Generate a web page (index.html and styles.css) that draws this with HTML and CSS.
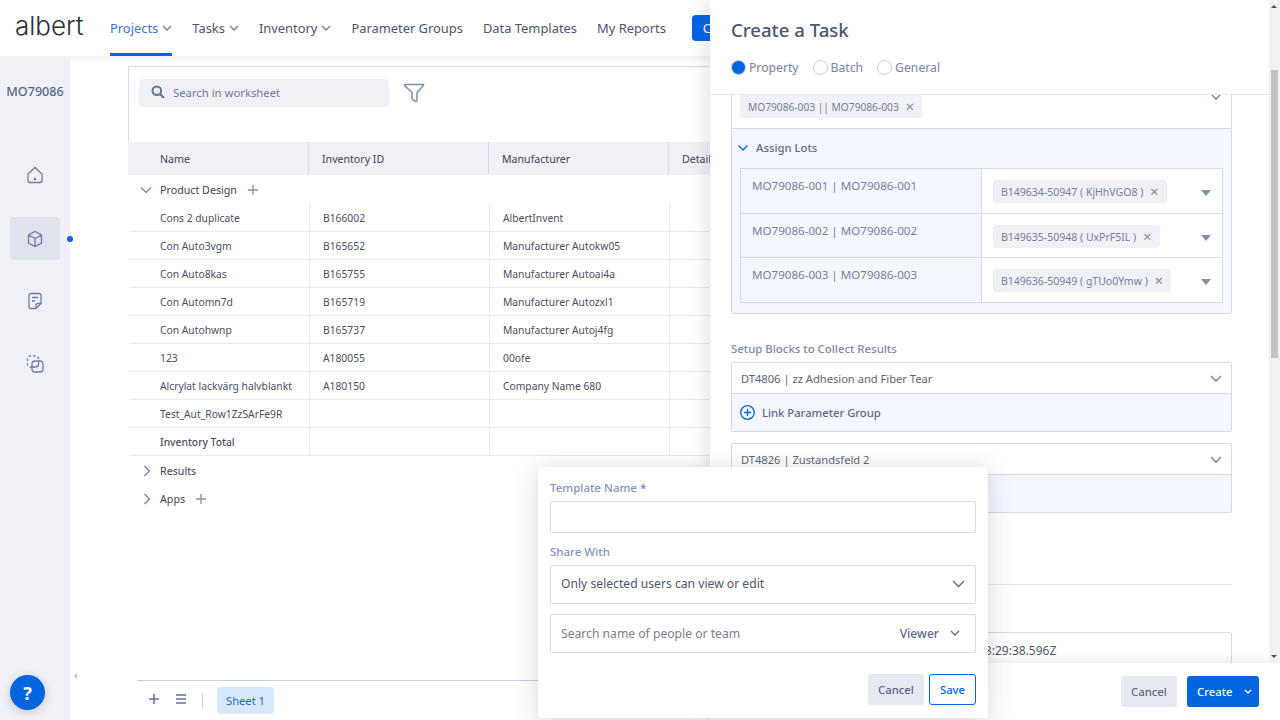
FILE: index.html
```html
<!DOCTYPE html>
<html>
<head>
<meta charset="utf-8" />
<title>Worksheet</title>
<link rel="stylesheet" href="styles.css">
</head>
<body>
<header class="topbar">
	<div class="logo">albert</div>
	<nav class="nav">
		<a class="nav-item active">Projects <svg class="chev" width="10" height="6" viewBox="0 0 10 6"><path d="M1 1l4 4 4-4"/></svg></a>
		<a class="nav-item">Tasks <svg class="chev" width="10" height="6" viewBox="0 0 10 6"><path d="M1 1l4 4 4-4"/></svg></a>
		<a class="nav-item">Inventory <svg class="chev" width="10" height="6" viewBox="0 0 10 6"><path d="M1 1l4 4 4-4"/></svg></a>
		<a class="nav-item">Parameter Groups</a>
		<a class="nav-item">Data Templates</a>
		<a class="nav-item">My Reports</a>
	</nav>
	<button class="top-create">C</button>
</header>

<div class="app">
	<aside class="sidebar">
		<div class="project-id">MO79086</div>
		<div class="side-icons">
			<div class="side-icon"><svg width="20" height="20" viewBox="0 0 20 20"><path d="M3 9l7-6.500L17 9v6.500a2 2 0 0 1-2 2H5a2 2 0 0 1-2-2z"/><circle cx="10" cy="14" r=".6"/></svg></div>
			<div class="side-icon current"><svg width="20" height="20" viewBox="0 0 20 20"><path d="M10 2.500l6.500 3.500v8L10 17.500 3.500 14V6zM3.500 6L10 9.500 16.500 6M10 9.500v8"/></svg><span class="side-dot"></span></div>
			<div class="side-icon"><svg width="20" height="20" viewBox="0 0 20 20"><path d="M11 17.500H6a2 2 0 0 1-2-2v-11a2 2 0 0 1 2-2h8a2 2 0 0 1 2 2v8zM7 6.500h6M7 10h3M11 17.500v-3a2 2 0 0 1 2-2h3"/></svg></div>
			<div class="side-icon"><svg width="20" height="20" viewBox="0 0 20 20"><path d="M7 13H5a2.500 2.500 0 0 1-2.500-2.500v-6A2.500 2.500 0 0 1 5 2h6a2.500 2.500 0 0 1 2.500 2.500V7" stroke-dasharray="2.500 2.200"/><rect x="7" y="7" width="11" height="11" rx="3"/><path d="M7 13h3.500a3 3 0 0 0 3-3V7"/></svg></div>
		</div>
		<button class="help">?</button>
	</aside>

	<main class="sheet">
		<span class="collapse-arrow"></span>
		<div class="sheet-card">
			<div class="sheet-tools">
				<div class="sheet-search">
					<svg width="14" height="14" viewBox="0 0 14 14"><circle cx="5.800" cy="5.800" r="4.300"/><path d="M9 9l4 4"/></svg>
					<span>Search in worksheet</span>
				</div>
				<svg class="filter" width="22" height="22" viewBox="0 0 22 22"><path d="M2 2.500h18a.6.6 0 0 1 .4 1L14 10.500v8a1 1 0 0 1-1.500.8l-3-2a1 1 0 0 1-.5-.8v-6L1.600 3.500A.6.6 0 0 1 2 2.500z"/></svg>
			</div>
			<div class="grid-head">
				<div class="col-name">Name</div>
				<div class="col-id">Inventory ID</div>
				<div class="col-man">Manufacturer</div>
				<div class="col-rest">Details</div>
			</div>
			<div class="group group-first">
				<svg class="tw" width="12" height="8" viewBox="0 0 12 8"><path d="M1 1.500l5 5 5-5"/></svg>
				<span>Product Design</span>
				<svg class="plus" width="10" height="10" viewBox="0 0 10 10"><path d="M5 0v10M0 5h10"/></svg>
			</div>
			<div class="row"><div class="col-name">Cons 2 duplicate</div><div class="col-id">B166002</div><div class="col-man">AlbertInvent</div><div class="col-rest"></div></div>
			<div class="row"><div class="col-name">Con Auto3vgm</div><div class="col-id">B165652</div><div class="col-man">Manufacturer Autokw05</div><div class="col-rest"></div></div>
			<div class="row"><div class="col-name">Con Auto8kas</div><div class="col-id">B165755</div><div class="col-man">Manufacturer Autoai4a</div><div class="col-rest"></div></div>
			<div class="row"><div class="col-name">Con Automn7d</div><div class="col-id">B165719</div><div class="col-man">Manufacturer Autozxl1</div><div class="col-rest"></div></div>
			<div class="row"><div class="col-name">Con Autohwnp</div><div class="col-id">B165737</div><div class="col-man">Manufacturer Autoj4fg</div><div class="col-rest"></div></div>
			<div class="row"><div class="col-name">123</div><div class="col-id">A180055</div><div class="col-man">00ofe</div><div class="col-rest"></div></div>
			<div class="row"><div class="col-name">Alcrylat lackvärg halvblankt</div><div class="col-id">A180150</div><div class="col-man">Company Name 680</div><div class="col-rest"></div></div>
			<div class="row"><div class="col-name">Test_Aut_Row1ZzSArFe9R</div><div class="col-id"></div><div class="col-man"></div><div class="col-rest"></div></div>
			<div class="row row-total"><div class="col-name">Inventory Total</div><div class="col-id"></div><div class="col-man"></div><div class="col-rest"></div></div>
			<div class="group group-results">
				<svg class="tw tw-closed" width="8" height="12" viewBox="0 0 8 12"><path d="M1.500 1l5 5-5 5"/></svg>
				<span>Results</span>
			</div>
			<div class="group">
				<svg class="tw tw-closed" width="8" height="12" viewBox="0 0 8 12"><path d="M1.500 1l5 5-5 5"/></svg>
				<span>Apps</span>
				<svg class="plus" width="10" height="10" viewBox="0 0 10 10"><path d="M5 0v10M0 5h10"/></svg>
			</div>
		</div>
		<div class="sheet-tabs">
			<svg class="tab-icon" width="12" height="12" viewBox="0 0 12 12"><path d="M6 1v10M1 6h10"/></svg>
			<svg class="tab-icon" width="12" height="12" viewBox="0 0 12 12"><path d="M1 2h10M1 6h10M1 10h10"/></svg>
			<span class="tab-sep"></span>
			<span class="tab">Sheet 1</span>
		</div>
	</main>
</div>

<section class="drawer">
	<div class="drawer-head">
		<h2>Create a Task</h2>
		<div class="radios">
			<label class="radio on"><i></i>Property</label>
			<label class="radio"><i></i>Batch</label>
			<label class="radio"><i></i>General</label>
		</div>
	</div>
	<div class="drawer-body">
		<div class="lots-box">
			<div class="lots-top">
				<span class="chip chip-top">MO79086-003 || MO79086-003 <b>×</b></span>
				<svg class="top-chev" width="10" height="6" viewBox="0 0 10 6"><path d="M1 1l4 4 4-4"/></svg>
			</div>
			<div class="lots">
				<div class="lots-title">
					<svg width="10" height="6" viewBox="0 0 10 6"><path d="M.5.5L5 5 9.500.5"/></svg>
					Assign Lots
				</div>
				<div class="lots-table">
					<div class="lot"><div class="lot-name">MO79086-001 | MO79086-001</div><div class="lot-val"><span class="chip">B149634-50947 ( KjHhVGO8 ) <b>×</b></span><i class="caret"></i></div></div>
					<div class="lot"><div class="lot-name">MO79086-002 | MO79086-002</div><div class="lot-val"><span class="chip">B149635-50948 ( UxPrF5IL ) <b>×</b></span><i class="caret"></i></div></div>
					<div class="lot"><div class="lot-name">MO79086-003 | MO79086-003</div><div class="lot-val"><span class="chip">B149636-50949 ( gTUo0Ymw ) <b>×</b></span><i class="caret"></i></div></div>
				</div>
			</div>
		</div>

		<div class="blocks-label">Setup Blocks to Collect Results</div>
		<div class="block">
			<div class="block-top">DT4806 | zz Adhesion and Fiber Tear <svg width="12" height="7" viewBox="0 0 12 7"><path d="M1 1l5 5 5-5"/></svg></div>
			<div class="block-link">
				<svg width="15" height="15" viewBox="0 0 15 15"><circle cx="7.500" cy="7.500" r="6.800"/><path d="M7.500 4v7M4 7.500h7"/></svg>
				Link Parameter Group
			</div>
		</div>
		<div class="block">
			<div class="block-top">DT4826 | Zustandsfeld 2 <svg width="12" height="7" viewBox="0 0 12 7"><path d="M1 1l5 5 5-5"/></svg></div>
			<div class="block-link"></div>
		</div>
		<div class="rule"></div>
		<div class="date-field">13:29:38.596Z</div>
	</div>
	<div class="drawer-foot">
		<button class="btn btn-grey">Cancel</button>
		<button class="btn btn-blue">Create <svg width="8" height="5" viewBox="0 0 8 5"><path d="M1 1l3 3 3-3"/></svg></button>
	</div>
	<div class="scrollbar"><span class="arrow-up"></span><span class="thumb"></span><span class="arrow-down"></span></div>
</section>

<section class="popover">
	<label class="pop-label">Template Name <em>*</em></label>
	<div class="pop-input"></div>
	<label class="pop-label">Share With</label>
	<div class="pop-select">Only selected users can view or edit <svg width="13" height="8" viewBox="0 0 13 8"><path d="M1 1l5.500 5.500L12 1"/></svg></div>
	<div class="pop-search">
		<span class="pop-ph">Search name of people or team</span>
		<span class="pop-role">Viewer</span>
		<svg width="10" height="6" viewBox="0 0 10 6"><path d="M1 1l4 4 4-4"/></svg>
	</div>
	<div class="pop-actions">
		<button class="btn btn-grey">Cancel</button>
		<button class="btn btn-line">Save</button>
	</div>
</section>
</body>
</html>
```

FILE: styles.css
```css
* {
	box-sizing: border-box;
}

html, body {
	margin: 0;
	height: 720px;
	overflow: hidden;
}

body {
	position: relative;
	background-color: #fff;
	color: #4a5068;
	font-family: "Noto Sans", sans-serif;
	font-size: 12px;
}

svg {
	fill: none;
	stroke: #6d7ea6;
	stroke-width: 1.300;
	flex: none;
}

button {
	font-family: inherit;
	cursor: pointer;
}

/* top bar */

.topbar {
	display: flex;
	align-items: stretch;
	height: 56px;
	padding-left: 15px;
	background-color: #fff;
	box-shadow: 0 2px 8px rgba(60, 70, 100, 0.1);
	position: relative;
}

.logo {
	width: 95px;
	font-family: Inter, sans-serif;
	font-size: 26px;
	font-weight: 300;
	line-height: 52px;
	color: #2c2f38;
}

.nav {
	display: flex;
	gap: 20px;
}

.nav-item {
	display: flex;
	align-items: center;
	gap: 4px;
	height: 56px;
	padding-top: 2px;
	font-size: 12.900px;
	color: #4b5470;
	border-bottom: 3px solid transparent;
}

.nav-item.active {
	color: #3f6fd8;
	border-bottom-color: #0065e0;
}

.top-create {
	align-self: flex-start;
	margin: 15px 0 0 26px;
	width: 30px;
	height: 26px;
	padding: 0 0 0 11px;
	border: 0;
	border-radius: 4px;
	background-color: #0065e0;
	color: #fff;
	font-size: 13px;
	text-align: left;
}

/* left side */

.app {
	display: flex;
	height: 664px;
}

.sidebar {
	width: 70px;
	background-color: #f0f1f6;
	position: relative;
}

.project-id {
	margin-top: 27px;
	text-align: center;
	font-size: 12.600px;
	font-weight: 500;
	color: #5a6686;
}

.side-icons {
	display: flex;
	flex-direction: column;
	gap: 20px;
	margin: 53px 0 0 10px;
}

.side-icon {
	position: relative;
	display: flex;
	align-items: center;
	justify-content: center;
	width: 50px;
	height: 43px;
	border-radius: 4px;
}

.side-icon.current {
	top: 1px;
	background-color: #dfe3ed;
}

.side-dot {
	position: absolute;
	right: -13px;
	top: 19px;
	width: 6px;
	height: 6px;
	border-radius: 50%;
	background-color: #0065e0;
}

.help {
	position: absolute;
	left: 10px;
	bottom: 10px;
	width: 35px;
	height: 35px;
	border: 0;
	border-radius: 50%;
	background-color: #0065e0;
	color: #fff;
	font-size: 18px;
	font-weight: 700;
	box-shadow: 0 2px 8px rgba(60, 70, 100, 0.25);
}

/* worksheet */

.sheet {
	flex: 1;
	padding: 10px 0 0 58px;
	position: relative;
}

.collapse-arrow {
	position: absolute;
	left: 4px;
	bottom: 41px;
	border-top: 3px solid transparent;
	border-bottom: 3px solid transparent;
	border-right: 3px solid #c4c8d2;
}

.sheet-tools {
	display: flex;
	align-items: flex-start;
	gap: 14px;
	height: 76px;
	padding: 12px 0 0 10px;
	border-top: 1px solid #d4daea;
	border-left: 1px solid #d4daea;
}

.sheet-search {
	display: flex;
	align-items: center;
	gap: 8px;
	width: 250px;
	height: 28px;
	padding: 0 0 2px 12px;
	background-color: #f0f1f6;
	border-radius: 4px;
	font-size: 11.300px;
	color: #6f7c9c;
}

.sheet-search svg {
	stroke: #5f7099;
	stroke-width: 2;
}

.filter {
	margin-top: 3px;
	stroke: #7d8cb0;
	stroke-width: 1.500;
}

.grid-head, .row {
	display: flex;
}

.grid-head {
	height: 33px;
	background-color: #f0f1f6;
	color: #3d4258;
	font-size: 10.600px;
}

.grid-head > div {
	display: flex;
	align-items: center;
	height: 32px;
	padding-top: 2px;
	border-right: 1px solid #d4daea;
}

.col-name {
	flex: none;
	width: 181px;
	padding-left: 31px;
}

.grid-head .col-name {
	padding-left: 32px;
}

.col-id, .col-man {
	flex: none;
	width: 180px;
	padding-left: 13px;
}

.col-rest {
	flex: none;
	width: 60px;
	padding-left: 13px;
	border-right: 0 !important;
	white-space: nowrap;
	overflow: hidden;
}

.row {
	height: 28px;
	margin-left: 1px;
	border-bottom: 1px solid #e6e9f1;
	color: #4a4f5f;
	font-size: 10.300px;
}

.row > div {
	display: flex;
	align-items: center;
	border-right: 1px solid #e6e9f1;
}

.row-total {
	font-weight: 500;
}

.group {
	display: flex;
	align-items: center;
	height: 28px;
	padding-left: 12px;
	font-size: 10.700px;
	color: #3d4258;
}

.group-first {
	height: 29px;
}

.group-results {
	margin-top: 1px;
}

.group .tw {
	margin-right: 8px;
	stroke-width: 1.100;
}

.group .tw-closed {
	margin: 0 9px 0 3px;
	stroke-width: 1.200;
}

.plus {
	margin-left: 11px;
	stroke: #8090b4;
}

.sheet-tabs {
	position: absolute;
	left: 67px;
	right: 0;
	bottom: 0;
	height: 40px;
	display: flex;
	align-items: center;
	gap: 15px;
	padding-left: 11px;
	background-color: #fff;
	border-top: 1px solid #c9d0e3;
	box-shadow: 0 -6px 12px rgba(255, 255, 255, 0.9);
}

.tab-icon {
	stroke: #5f7099;
	stroke-width: 1.500;
	margin-top: -4px;
}

.tab-sep {
	width: 1px;
	height: 16px;
	background-color: #c9d0e3;
}

.tab {
	display: flex;
	align-items: center;
	height: 27px;
	margin-left: -1px;
	padding: 0 9px;
	border-radius: 4px;
	background-color: #d8e8fc;
	color: #2366d1;
	font-size: 11.200px;
}

/* create task drawer */

.drawer {
	position: absolute;
	left: 710px;
	top: 0;
	width: 570px;
	height: 720px;
	background-color: #fff;
	box-shadow: -6px 0 14px rgba(60, 70, 100, 0.12);
	display: flex;
	flex-direction: column;
}

.drawer-head {
	height: 95px;
	padding: 15px 0 0 21px;
	border-bottom: 1px solid #e4e7f0;
	margin-right: 11px;
}

.drawer-head h2 {
	margin: 0;
	font-size: 18.600px;
	font-weight: 500;
	line-height: 30px;
	color: #4a5672;
}

.radios {
	display: flex;
	gap: 14px;
	margin-top: 14px;
}

.radio {
	display: flex;
	align-items: center;
	gap: 3px;
	font-size: 12.200px;
	color: #79839e;
}

.radio i {
	width: 15px;
	height: 15px;
	border: 1px solid #c7ccd8;
	border-radius: 50%;
}

.radio.on i {
	background-color: #0065e0;
	border: 1px solid #c7d6ee;
}

.drawer-body {
	flex: 1;
	padding-left: 21px;
	width: 522px;
	overflow: hidden;
}

.lots-box {
	border: 1px solid #d4daea;
	border-top: 0;
	border-radius: 0 0 3px 3px;
}

.lots-top {
	position: relative;
	height: 34px;
	padding-left: 8px;
	border-bottom: 1px solid #d4daea;
}

.top-chev {
	position: absolute;
	right: 10px;
	top: -1px;
}

.chip {
	display: inline-block;
	height: 23px;
	padding: 0 8px;
	line-height: 22px;
	background-color: #f0f1f6;
	border-radius: 3px;
	font-size: 10.500px;
	color: #76809c;
	white-space: nowrap;
}

.chip-top {
	font-size: 10.200px;
}

.chip b {
	margin-left: 4px;
	font-size: 15px;
	font-weight: 400;
	color: #7e88a3;
	vertical-align: -1px;
}

.lots {
	background-color: #f4f7fe;
	padding: 0 8px 10px;
}

.lots-title {
	display: flex;
	align-items: center;
	gap: 8px;
	height: 39px;
	margin-left: -2px;
	padding-bottom: 2px;
	font-size: 11.300px;
	font-weight: 500;
	color: #5d6a8a;
}

.lots-title svg {
	stroke: #0065e0;
}

.lots-table {
	border: 1px solid #d4daea;
	border-bottom: 0;
}

.lot {
	display: flex;
	height: 45px;
	border-bottom: 1px solid #d4daea;
}

.lot:nth-child(2) {
	height: 44px;
}

.lot-name {
	width: 241px;
	padding: 9px 0 0 11px;
	border-right: 1px solid #d4daea;
	font-size: 11.600px;
	color: #76809c;
}

.lot-val {
	flex: 1;
	position: relative;
	padding: 11px 0 0 11px;
	background-color: #fff;
}

.caret {
	position: absolute;
	right: 11px;
	top: 21px;
	border-left: 5px solid transparent;
	border-right: 5px solid transparent;
	border-top: 6px solid #8290b0;
}

.blocks-label {
	margin: 27px 0 6px;
	font-size: 11.400px;
	font-weight: 500;
	color: #7c88a8;
}

.block {
	margin-bottom: 11px;
	border: 1px solid #d4daea;
	border-radius: 2px;
}

.block-top {
	display: flex;
	align-items: center;
	justify-content: space-between;
	height: 31px;
	padding: 0 9px;
	border-bottom: 1px solid #d4daea;
	font-size: 11.150px;
	color: #5b6478;
}

.block-link {
	display: flex;
	align-items: center;
	gap: 7px;
	height: 37px;
	padding-left: 8px;
	background-color: #f4f7fe;
	font-size: 11.250px;
	font-weight: 500;
	color: #5d6a8a;
}

.block-link svg {
	stroke: #0065e0;
}

.rule {
	margin-top: 71px;
	height: 1px;
	background-color: #e4e7f0;
}

.date-field {
	margin-top: 47px;
	height: 40px;
	padding: 9px 0;
	border: 1px solid #d4daea;
	border-radius: 2px;
	font-size: 12px;
	color: #4f5568;
	text-indent: 246px;
}

.drawer-foot {
	position: absolute;
	left: 0;
	right: 0;
	bottom: 0;
	height: 57px;
	display: flex;
	justify-content: flex-end;
	align-items: center;
	gap: 10px;
	padding: 0 21px 0 0;
	background-color: #fff;
	box-shadow: 0 -3px 8px rgba(60, 70, 100, 0.1);
}

.btn {
	height: 31px;
	border: 0;
	border-radius: 3px;
	font-size: 11.300px;
	font-weight: 500;
}

.btn-grey {
	width: 56px;
	background-color: #e6e9f1;
	color: #5a6686;
}

.btn-blue {
	display: flex;
	align-items: center;
	justify-content: space-between;
	width: 72px;
	padding: 0 7px 0 10px;
	background-color: #0065e0;
	color: #fff;
}

.btn-blue svg {
	stroke: #fff;
}

.btn-line {
	width: 47px;
	background-color: #fff;
	border: 1px solid #0065e0;
	color: #0065e0;
}

.scrollbar {
	position: absolute;
	right: 0;
	top: 0;
	width: 11px;
	height: 663px;
	background-color: #f1f1f1;
}

.thumb {
	position: absolute;
	top: 70px;
	left: 2px;
	width: 7px;
	height: 288px;
	background-color: #c1c1c1;
}

.arrow-up, .arrow-down {
	position: absolute;
	left: 2px;
	border-left: 3px solid transparent;
	border-right: 3px solid transparent;
}

.arrow-up {
	top: 5px;
	border-bottom: 3px solid #505050;
}

.arrow-down {
	bottom: 5px;
	border-top: 3px solid #505050;
}

/* save template popover */

.popover {
	position: absolute;
	left: 538px;
	top: 467px;
	width: 450px;
	height: 251px;
	padding: 12px 12px 0;
	background-color: #fff;
	border-radius: 3px;
	box-shadow: 0 4px 24px rgba(60, 70, 100, 0.22);
}

.pop-label {
	display: block;
	font-size: 11.500px;
	font-weight: 500;
	line-height: 17px;
	color: #8793b5;
}

.pop-label em {
	font-style: normal;
	color: #5d8bd8;
}

.pop-input {
	height: 32px;
	margin: 5px 0 10px;
	border: 1px solid #d4daea;
	border-radius: 2px;
}

.pop-select, .pop-search {
	display: flex;
	align-items: center;
	height: 39px;
	padding: 0 10px;
	border: 1px solid #d4daea;
	border-radius: 2px;
	font-size: 12.150px;
	color: #4f5568;
}

.pop-select {
	justify-content: space-between;
	margin: 5px 0 10px;
	padding-bottom: 2px;
}

.pop-select svg {
	stroke: #5d6a8a;
}

.pop-search svg {
	margin: -2px 5px 0 11px;
	stroke: #5d6a8a;
}

.pop-ph {
	flex: 1;
	color: #7a8090;
}

.pop-role {
	font-weight: 500;
	color: #5d6a8a;
}

.pop-actions {
	display: flex;
	justify-content: flex-end;
	gap: 5px;
	margin-top: 21px;
}
```
